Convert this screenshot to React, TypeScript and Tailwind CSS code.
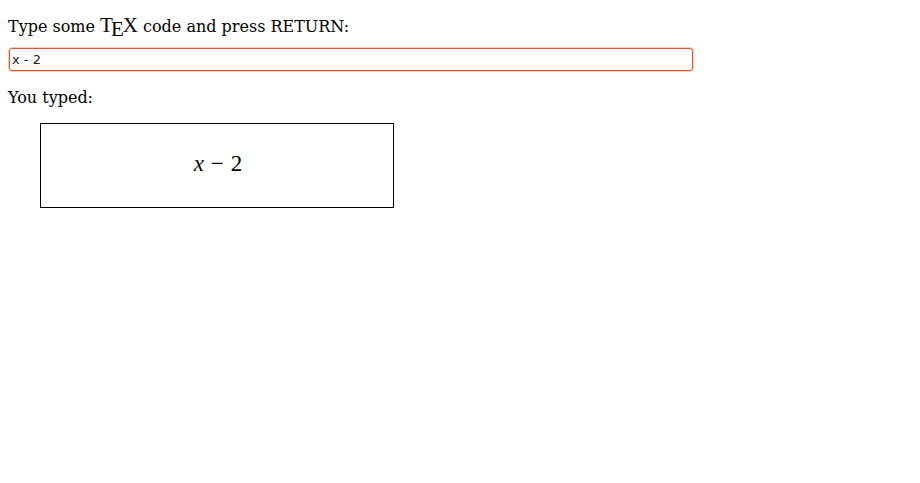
export default function App() {
  return (
    <div className="p-2 text-black bg-white min-h-screen" style={{ fontFamily: '"DejaVu Serif", serif' }}>
      <p className="mt-2 text-[16px] leading-[19px] flex items-baseline">
        <span>Type some&nbsp;</span>
        <span className="inline-flex items-baseline text-[21px]" style={{ fontFamily: '"Liberation Serif", serif' }}>
          <span>T</span>
          <span className="relative top-[4px] -ml-[2px] -mr-[1px]">E</span>
          <span>X</span>
        </span>
        <span>&nbsp;code and press RETURN:</span>
      </p>
      <input
        defaultValue="x - 2"
        className="mt-[12px] ml-[1px] block w-[684px] h-[23px] border border-[#e4572e] rounded-[3px] px-[2px] text-[13px] text-[#222] outline-none"
        style={{ fontFamily: '"DejaVu Sans", sans-serif', boxShadow: '0 0 0 0.5px #f0a080' }}
      />
      <p className="mt-[17px] text-[16px] leading-[19px]">You typed:</p>
      <div className="mt-[16px] ml-[32px] w-[354px] h-[85px] border border-black flex items-center justify-center">
        <span className="text-[23px] leading-none pl-[2px] pb-[4px]" style={{ fontFamily: '"Liberation Serif", serif' }}>
          <i>x</i>
          <span className="mx-[7px]">−</span>
          <span>2</span>
        </span>
      </div>
    </div>
  );
}
